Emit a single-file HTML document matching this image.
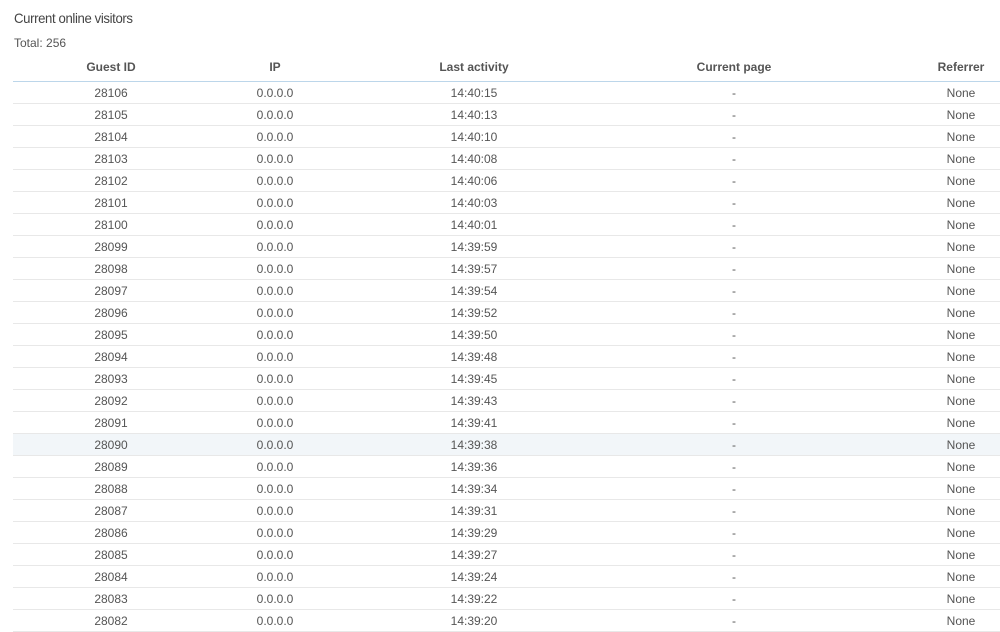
<!DOCTYPE html>
<html><head><style>
body{margin:0;background:#fff;width:1000px;height:610px;overflow:hidden;font-family:"Liberation Sans",sans-serif;color:#555;}
h1{position:absolute;left:14px;top:10px;margin:0;font-size:14px;font-weight:normal;color:#444;letter-spacing:-0.4px;transform:scaleX(0.94);transform-origin:left}
.tot{position:absolute;left:14px;top:36px;font-size:12px;color:#555}
table{position:absolute;left:13px;top:56px;border-collapse:collapse;table-layout:fixed;width:1048px;font-size:12px}
th{height:22px;padding:0 0 3px 0;font-weight:bold;color:#555;border-bottom:1px solid #bcd6ea;text-align:center;vertical-align:middle}
td{height:21px;border-bottom:1px solid #e8e8e8;text-align:center;padding:0;color:#555}
tr.h td{background:#f2f6f9}
</style></head><body>
<h1>Current online visitors</h1>
<div class="tot">Total: 256</div>
<table>
<colgroup><col style="width:196px"><col style="width:132px"><col style="width:266px"><col style="width:254px"><col style="width:200px"></colgroup>
<tr><th>Guest ID</th><th>IP</th><th>Last activity</th><th>Current page</th><th>Referrer</th></tr>
<tr><td>28106</td><td>0.0.0.0</td><td>14:40:15</td><td>-</td><td>None</td></tr>
<tr><td>28105</td><td>0.0.0.0</td><td>14:40:13</td><td>-</td><td>None</td></tr>
<tr><td>28104</td><td>0.0.0.0</td><td>14:40:10</td><td>-</td><td>None</td></tr>
<tr><td>28103</td><td>0.0.0.0</td><td>14:40:08</td><td>-</td><td>None</td></tr>
<tr><td>28102</td><td>0.0.0.0</td><td>14:40:06</td><td>-</td><td>None</td></tr>
<tr><td>28101</td><td>0.0.0.0</td><td>14:40:03</td><td>-</td><td>None</td></tr>
<tr><td>28100</td><td>0.0.0.0</td><td>14:40:01</td><td>-</td><td>None</td></tr>
<tr><td>28099</td><td>0.0.0.0</td><td>14:39:59</td><td>-</td><td>None</td></tr>
<tr><td>28098</td><td>0.0.0.0</td><td>14:39:57</td><td>-</td><td>None</td></tr>
<tr><td>28097</td><td>0.0.0.0</td><td>14:39:54</td><td>-</td><td>None</td></tr>
<tr><td>28096</td><td>0.0.0.0</td><td>14:39:52</td><td>-</td><td>None</td></tr>
<tr><td>28095</td><td>0.0.0.0</td><td>14:39:50</td><td>-</td><td>None</td></tr>
<tr><td>28094</td><td>0.0.0.0</td><td>14:39:48</td><td>-</td><td>None</td></tr>
<tr><td>28093</td><td>0.0.0.0</td><td>14:39:45</td><td>-</td><td>None</td></tr>
<tr><td>28092</td><td>0.0.0.0</td><td>14:39:43</td><td>-</td><td>None</td></tr>
<tr><td>28091</td><td>0.0.0.0</td><td>14:39:41</td><td>-</td><td>None</td></tr>
<tr class="h"><td>28090</td><td>0.0.0.0</td><td>14:39:38</td><td>-</td><td>None</td></tr>
<tr><td>28089</td><td>0.0.0.0</td><td>14:39:36</td><td>-</td><td>None</td></tr>
<tr><td>28088</td><td>0.0.0.0</td><td>14:39:34</td><td>-</td><td>None</td></tr>
<tr><td>28087</td><td>0.0.0.0</td><td>14:39:31</td><td>-</td><td>None</td></tr>
<tr><td>28086</td><td>0.0.0.0</td><td>14:39:29</td><td>-</td><td>None</td></tr>
<tr><td>28085</td><td>0.0.0.0</td><td>14:39:27</td><td>-</td><td>None</td></tr>
<tr><td>28084</td><td>0.0.0.0</td><td>14:39:24</td><td>-</td><td>None</td></tr>
<tr><td>28083</td><td>0.0.0.0</td><td>14:39:22</td><td>-</td><td>None</td></tr>
<tr><td>28082</td><td>0.0.0.0</td><td>14:39:20</td><td>-</td><td>None</td></tr>
</table>
</body></html>
